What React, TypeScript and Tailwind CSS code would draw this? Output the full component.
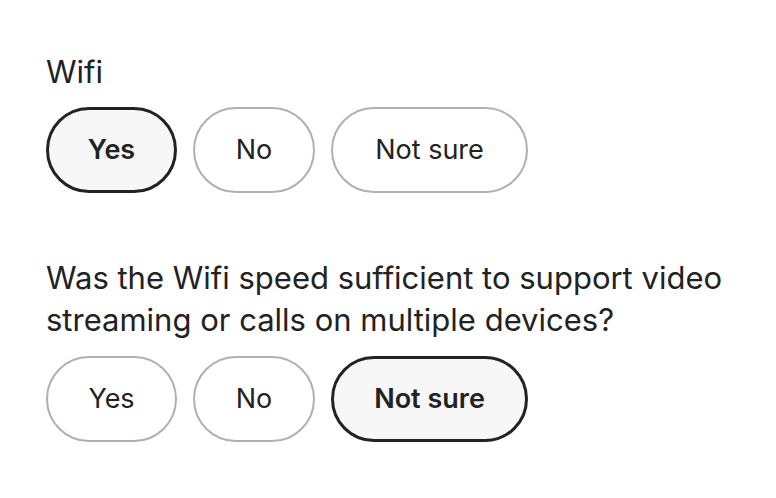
import { useState } from "react";

const OPTIONS = ["Yes", "No", "Not sure"];

const widths: Record<string, string> = {
  Yes: "w-[131px]",
  No: "w-[122px]",
  "Not sure": "w-[197px]",
};

function Choices({ value, onChange }: { value: string; onChange: (v: string) => void }) {
  return (
    <div className="flex gap-[16px]">
      {OPTIONS.map((opt) => {
        const selected = opt === value;
        return (
          <button
            key={opt}
            onClick={() => onChange(opt)}
            className={
              selected
                ? `${widths[opt]} h-[86px] rounded-full border-[3px] border-[#222222] bg-[#f7f7f7] text-[27px] font-semibold text-[#222222]`
                : `${widths[opt]} h-[86px] rounded-full border-2 border-[#b0b0b0] bg-white text-[27px] text-[#222222]`
            }
          >
            {opt}
          </button>
        );
      })}
    </div>
  );
}

export default function App() {
  const [wifi, setWifi] = useState("Yes");
  const [speed, setSpeed] = useState("Not sure");

  return (
    <div
      className="min-h-screen bg-white px-[46px] pt-[52px] text-[#222222]"
      style={{ fontFamily: "Inter, 'Noto Sans', sans-serif" }}
    >
      <div className="text-[31px] leading-[40px]">Wifi</div>
      <div className="mt-[15px]">
        <Choices value={wifi} onChange={setWifi} />
      </div>

      <div className="mt-[64px] text-[31px] leading-[42px]">
        Was the Wifi speed sufficient to support video streaming or calls on multiple devices?
      </div>
      <div className="mt-[15px]">
        <Choices value={speed} onChange={setSpeed} />
      </div>
    </div>
  );
}
